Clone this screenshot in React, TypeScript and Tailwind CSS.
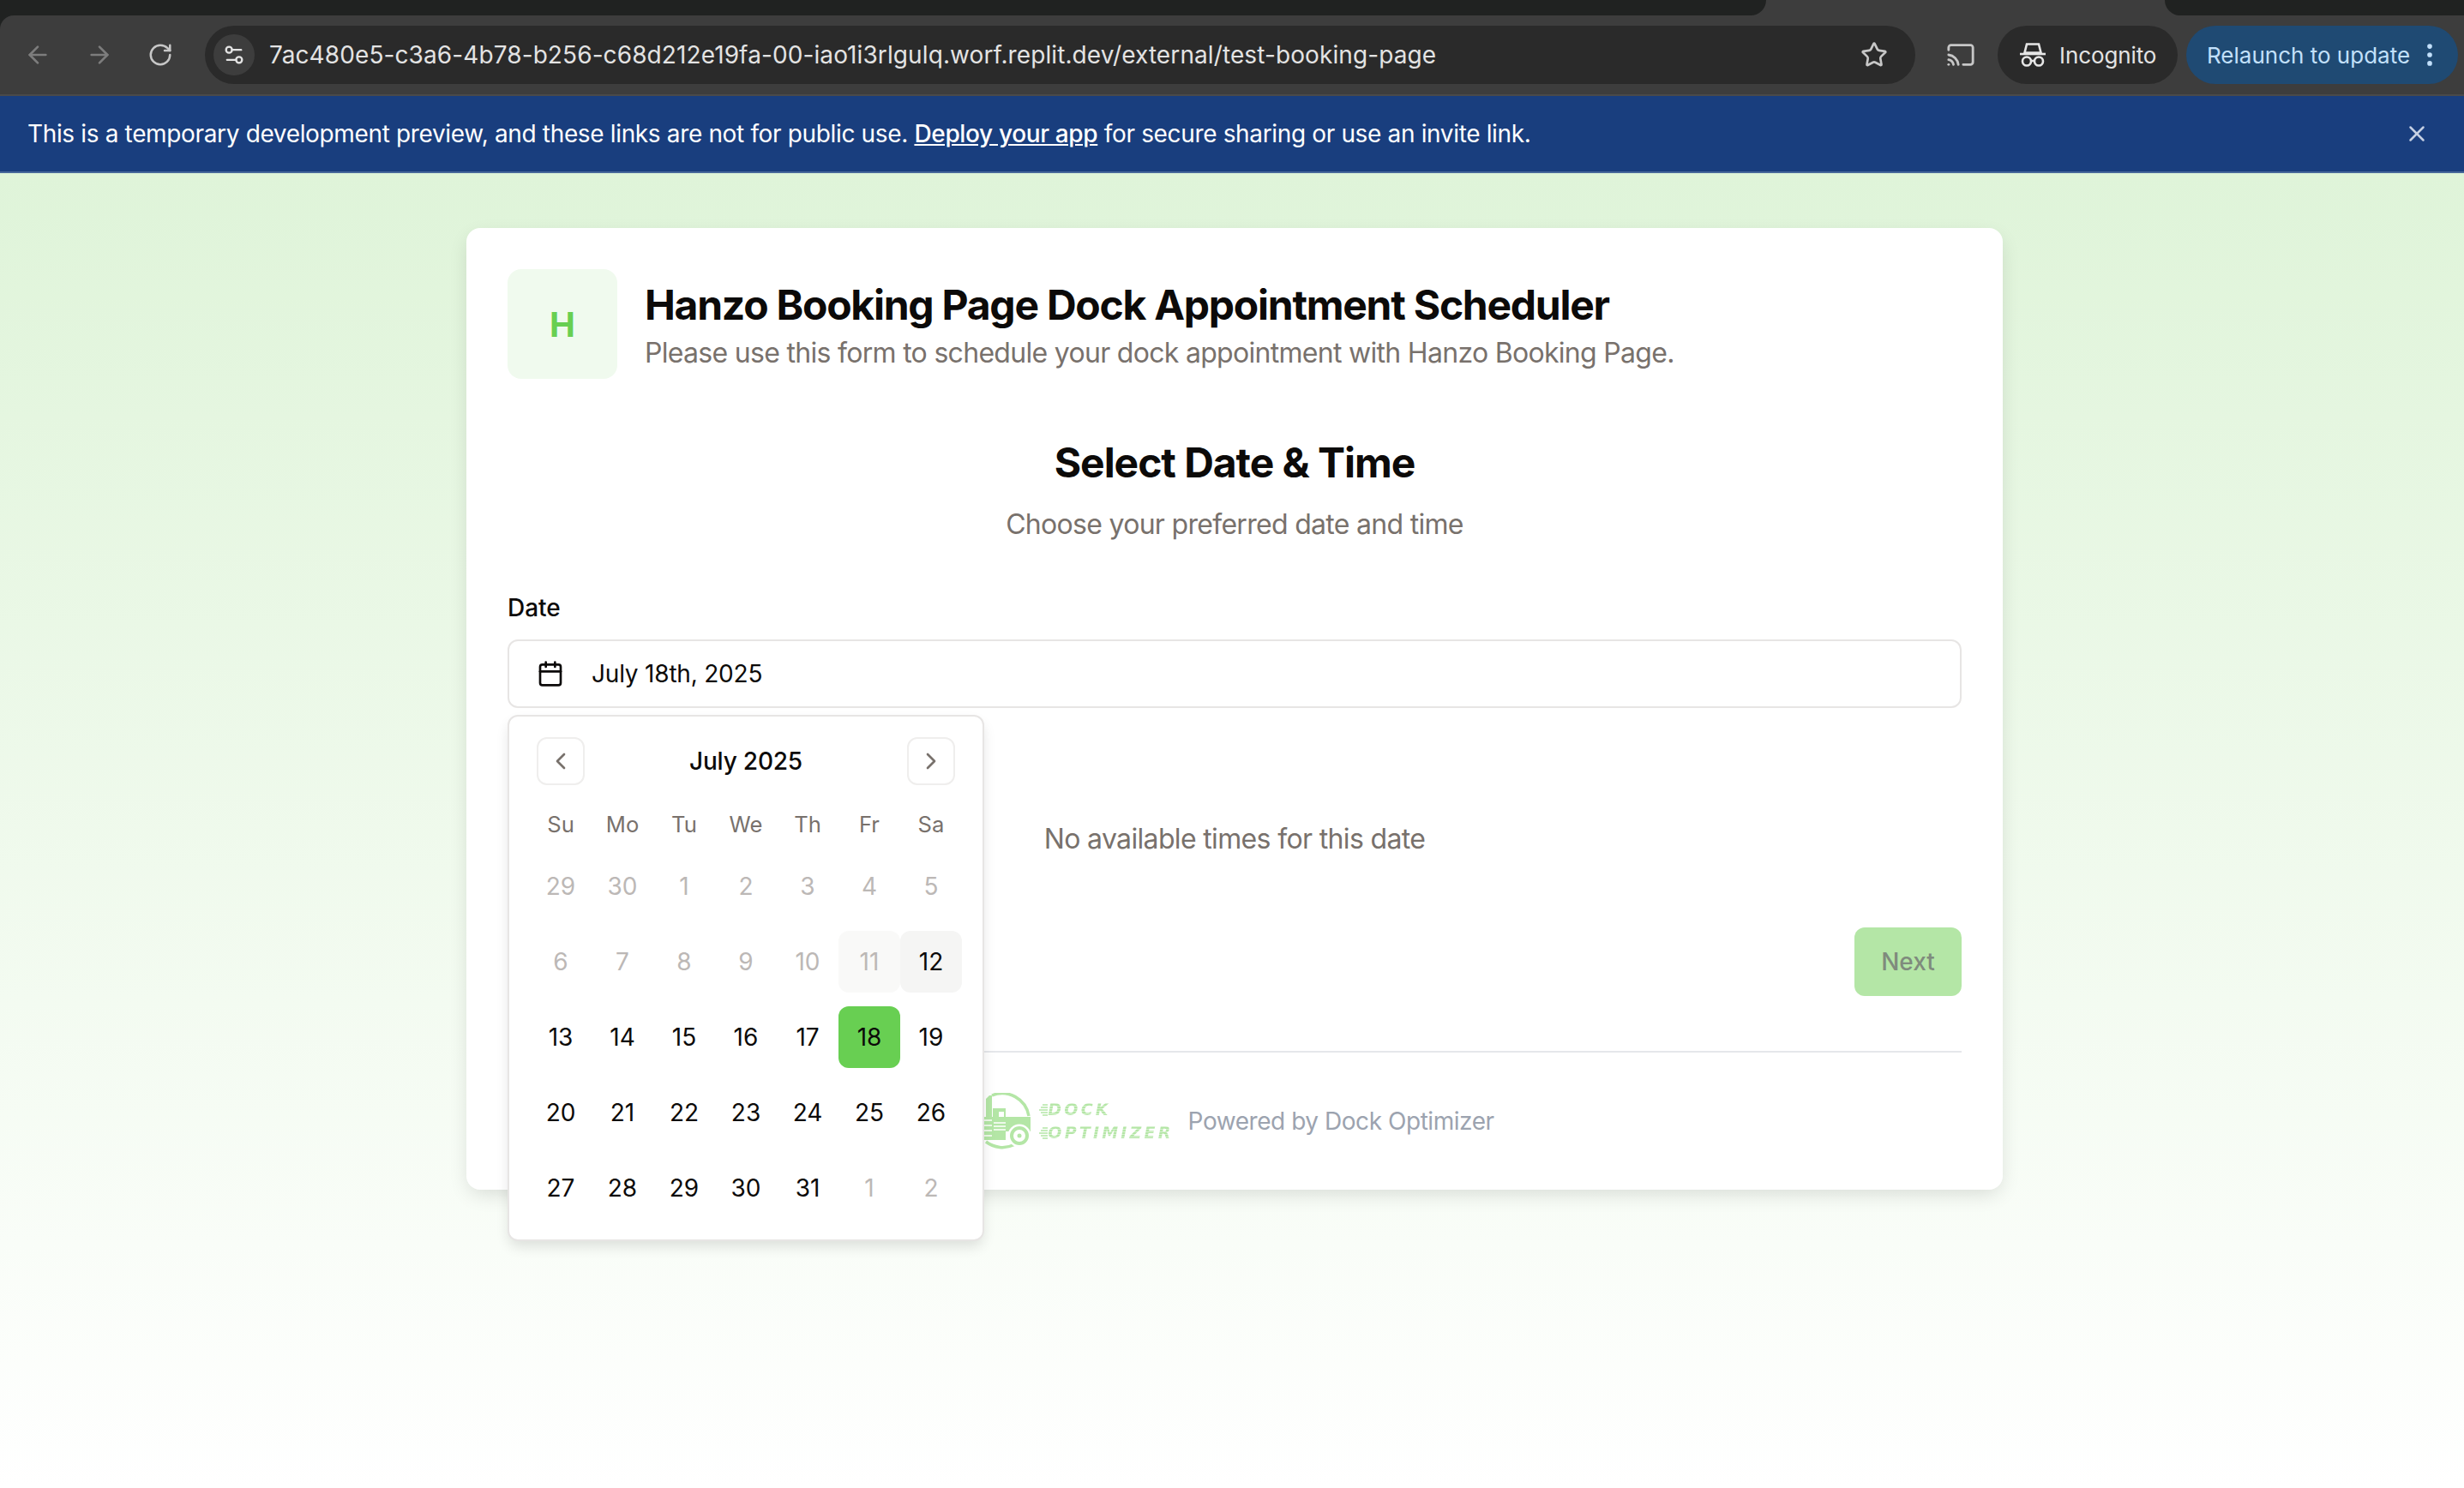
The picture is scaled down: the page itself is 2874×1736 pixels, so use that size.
import { ArrowLeft, ArrowRight, Calendar, Cast, ChevronLeft, ChevronRight, MoreVertical, RotateCw, Settings2, Star, X } from 'lucide-react';

const weekDays = ['Su', 'Mo', 'Tu', 'We', 'Th', 'Fr', 'Sa'];

type Day = { label: number; muted?: boolean; tone?: 'soft' | 'today' | 'selected' };

const weeks: Day[][] = [
  [{ label: 29, muted: true }, { label: 30, muted: true }, { label: 1, muted: true }, { label: 2, muted: true }, { label: 3, muted: true }, { label: 4, muted: true }, { label: 5, muted: true }],
  [{ label: 6, muted: true }, { label: 7, muted: true }, { label: 8, muted: true }, { label: 9, muted: true }, { label: 10, muted: true }, { label: 11, muted: true, tone: 'soft' }, { label: 12, tone: 'today' }],
  [{ label: 13 }, { label: 14 }, { label: 15 }, { label: 16 }, { label: 17 }, { label: 18, tone: 'selected' }, { label: 19 }],
  [{ label: 20 }, { label: 21 }, { label: 22 }, { label: 23 }, { label: 24 }, { label: 25 }, { label: 26 }],
  [{ label: 27 }, { label: 28 }, { label: 29 }, { label: 30 }, { label: 31 }, { label: 1, muted: true }, { label: 2, muted: true }],
];

function IncognitoIcon() {
  return (
    <svg width="30" height="28" viewBox="0 0 30 28" fill="none" stroke="#e6e6e6" strokeWidth="2.6">
      <path d="M8 1.5h14l2.5 10h-19z" fill="#2a2a2a" />
      <path d="M0 13h30" />
      <circle cx="8" cy="21.5" r="5" />
      <circle cx="22" cy="21.5" r="5" />
      <path d="M13 21h4" />
    </svg>
  );
}

function TruckLogo() {
  return (
    <svg width="68" height="66" viewBox="0 0 68 66" fill="none">
      <path d="M20 3A31.5 31.5 0 0 1 63 27" stroke="#b4e6a6" strokeWidth="3.5" />
      <path d="M13 57A31.5 31.5 0 0 0 46 60.5" stroke="#b4e6a6" strokeWidth="3.5" />
      <path d="M13 7l4-4h3v47h-7z" fill="#b4e6a6" />
      <path d="M21 18h15v10h29v17H21z" fill="#b4e6a6" />
      <path d="M11 28h25v27H11z" fill="#b4e6a6" />
      <path d="M28 22h6v6h-6z" fill="#fff" />
      <path d="M22 35h14M22 39h14M22 43h14M11 32h9M11 38h9M11 44h9M11 50h9" stroke="#fff" strokeWidth="1.4" />
      <circle cx="52" cy="50" r="13.5" fill="#fff" />
      <circle cx="52" cy="50" r="9" stroke="#b4e6a6" strokeWidth="4" />
      <circle cx="52" cy="50" r="2.5" fill="#b4e6a6" />
    </svg>
  );
}

function SpeedLines() {
  return (
    <svg width="10" height="14" viewBox="0 0 10 14" stroke="#b4e6a6" strokeWidth="1.4">
      <path d="M4 1h6M2 4h8M0 7h10M2 10h8M4 13h6" />
    </svg>
  );
}

function BrowserChrome() {
  return (
    <div className="bg-[#202221]">
      <div className="flex h-[18px] bg-[#3d3d3d]">
        <div className="w-[2060px] rounded-br-[20px] bg-[#202221]" />
        <div className="w-[465px]" />
        <div className="flex-1 rounded-bl-[20px] bg-[#202221]" />
      </div>
      <div className="flex h-[92px] items-center rounded-tl-[16px] bg-[#3d3d3d] pl-[28px] pr-[6px]">
        <ArrowLeft className="h-[32px] w-[32px] text-[#7d7d7d]" strokeWidth={2} />
        <ArrowRight className="ml-[40px] h-[32px] w-[32px] text-[#7d7d7d]" strokeWidth={2} />
        <RotateCw className="ml-[40px] h-[30px] w-[30px] text-[#c7c7c7]" strokeWidth={2} />
        <div className="ml-[37px] flex h-[68px] w-[1995px] items-center rounded-full bg-[#2a2a2a] pl-[10px] pr-[32px]">
          <div className="flex h-[48px] w-[48px] items-center justify-center rounded-full bg-[#3d3d3d]">
            <Settings2 className="h-[28px] w-[28px] text-[#e3e3e3]" strokeWidth={2} />
          </div>
          <span className="ml-[17px] flex-1 text-[28px] tracking-[0.1px] text-[#e3e3e3]">7ac480e5-c3a6-4b78-b256-c68d212e19fa-00-iao1i3rlgulq.worf.replit.dev/external/test-booking-page</span>
          <Star className="h-[32px] w-[32px] text-[#c7c7c7]" strokeWidth={2} />
        </div>
        <Cast className="ml-[36px] h-[34px] w-[34px] text-[#c7c7c7]" strokeWidth={2} />
        <div className="ml-[26px] flex h-[68px] w-[210px] items-center rounded-full bg-[#2a2a2a] pl-[26px]">
          <IncognitoIcon />
          <span className="ml-[16px] text-[26px] tracking-[-0.1px] text-[#e3e3e3]">Incognito</span>
        </div>
        <div className="ml-[10px] flex h-[68px] w-[317px] items-center rounded-full bg-[#1f4a73] pl-[24px]">
          <span className="text-[26px] text-[#c2e0fb]">Relaunch to update</span>
          <MoreVertical className="ml-[6px] h-[34px] w-[34px] text-[#c2e0fb]" strokeWidth={2} />
        </div>
      </div>
      <div className="h-[2px] bg-[#4a4a4a]" />
      <div className="flex h-[90px] items-center justify-between border-b-2 border-[#47689a] bg-[#193e7e] pl-[32px] pr-[40px] text-[28px] tracking-[-0.35px] text-white">
        <span>
          This is a temporary development preview, and these links are not for public use. <span className="font-medium underline">Deploy your app</span> for secure sharing or use an invite link.
        </span>
        <X className="h-[30px] w-[30px] text-[#c5d0e3]" strokeWidth={2} />
      </div>
    </div>
  );
}

function DatePopover() {
  return (
    <div className="absolute left-0 top-[88px] z-10 w-[556px] rounded-[12px] border-2 border-[#e7e5e4] bg-white p-[24px] shadow-[0_8px_16px_-2px_rgba(0,0,0,0.12)]">
      <div className="flex h-[56px] items-center justify-between px-[8px]">
        <button className="flex h-[56px] w-[56px] items-center justify-center rounded-[12px] border-2 border-[#efeeed] text-[#78716c]">
          <ChevronLeft className="h-[32px] w-[32px]" strokeWidth={2} />
        </button>
        <span className="text-[28px] font-medium tracking-[-0.2px] text-[#0c0a09]">July 2025</span>
        <button className="flex h-[56px] w-[56px] items-center justify-center rounded-[12px] border-2 border-[#efeeed] text-[#78716c]">
          <ChevronRight className="h-[32px] w-[32px]" strokeWidth={2} />
        </button>
      </div>
      <div className="mt-[26px] grid h-[40px] grid-cols-7 items-center text-center text-[25.6px] text-[#78716c]">
        {weekDays.map((d) => (
          <span key={d}>{d}</span>
        ))}
      </div>
      <div className="mt-[16px] flex flex-col gap-[16px]">
        {weeks.map((week, i) => (
          <div key={i} className="grid grid-cols-7">
            {week.map((day, j) => (
              <div
                key={j}
                className={
                  day.tone === 'selected'
                    ? 'flex h-[72px] items-center justify-center rounded-[12px] bg-[#68cf52] text-[28px] text-[#0c0a09]'
                    : day.tone === 'today'
                      ? 'flex h-[72px] items-center justify-center rounded-[12px] bg-[#f5f5f4] text-[28px] text-[#0c0a09]'
                      : day.tone === 'soft'
                        ? 'flex h-[72px] items-center justify-center rounded-[12px] bg-[#f9f9f8] text-[28px] text-[#bcb8b6]'
                        : day.muted
                          ? 'flex h-[72px] items-center justify-center text-[28px] text-[#bcb8b6]'
                          : 'flex h-[72px] items-center justify-center text-[28px] text-[#0c0a09]'
                }
              >
                {day.label}
              </div>
            ))}
          </div>
        ))}
      </div>
    </div>
  );
}

export default function App() {
  return (
    <div className="flex min-h-[1736px] flex-col overflow-hidden bg-white [font-family:Inter,sans-serif]">
      <BrowserChrome />

      {/* Page */}
      <main className="flex flex-1 justify-center bg-linear-to-b from-[#dff4d9] to-white pl-[6px] pt-[64px]">
        <div className="h-[1122px] w-[1792px] rounded-[16px] bg-white px-[48px] pt-[48px] shadow-[0_8px_24px_-4px_rgba(0,0,0,0.14)]">
          {/* Header */}
          <div className="flex items-center gap-[32px]">
            <div className="flex h-[128px] w-[128px] items-center justify-center rounded-[16px] bg-[#f0faee] pt-[2px] text-[40px] font-bold text-[#68cf52]">
              H
            </div>
            <div className="pt-[6px]">
              <h1 className="text-[48px] font-bold leading-[56px] tracking-[-1.25px] text-[#0c0a09]">Hanzo Booking Page Dock Appointment Scheduler</h1>
              <p className="mt-[6px] text-[32px] leading-[44px] tracking-[-0.7px] text-[#78716c]">Please use this form to schedule your dock appointment with Hanzo Booking Page.</p>
            </div>
          </div>

          {/* Step title */}
          <div className="mt-[66px] text-center">
            <h2 className="text-[48px] font-bold leading-[64px] tracking-[-1.05px] text-[#0c0a09]">Select Date &amp; Time</h2>
            <p className="mt-[16px] text-[32px] leading-[48px] tracking-[-0.7px] text-[#78716c]">Choose your preferred date and time</p>
          </div>

          {/* Date field */}
          <div className="mt-[53px]">
            <label className="block text-[28px] font-medium leading-[40px] text-[#0c0a09]">Date</label>
            <div className="relative mt-[17px]">
              <div className="flex h-[80px] items-center rounded-[12px] border-2 border-[#e7e5e4] pl-[32px] text-[28px] tracking-[-0.2px] text-[#0c0a09]">
                <Calendar className="h-[32px] w-[32px]" strokeWidth={2} />
                <span className="ml-[32px]">July 18th, 2025</span>
              </div>
              <DatePopover />
            </div>
          </div>

          {/* Times */}
          <p className="mt-[129px] text-center text-[32px] leading-[48px] tracking-[-0.65px] text-[#78716c]">No available times for this date</p>

          <div className="mt-[79px] flex justify-end">
            <button className="flex h-[80px] w-[125px] items-center justify-center rounded-[12px] bg-[#b4e6a6] text-[28px] font-medium text-[#7f8b7d]">Next</button>
          </div>

          {/* Footer */}
          <div className="mt-[64px] flex h-[162px] items-center justify-center gap-[17px] border-t-2 border-[#e5e7eb]">
            <div className="flex items-center gap-[7px]">
              <TruckLogo />
              <div className="flex flex-col gap-[8px] text-[19px] font-bold italic leading-[19px] tracking-[3.2px] [font-family:'DejaVu_Sans',sans-serif]">
                <span className="flex items-center">
                  <SpeedLines />
                  <span className="bg-[repeating-linear-gradient(180deg,#b4e6a6_0px,#b4e6a6_2px,#d6f1ce_2px,#d6f1ce_3px)] bg-clip-text text-transparent">DOCK</span>
                </span>
                <span className="flex items-center">
                  <SpeedLines />
                  <span className="bg-[repeating-linear-gradient(180deg,#b4e6a6_0px,#b4e6a6_2px,#d6f1ce_2px,#d6f1ce_3px)] bg-clip-text text-transparent">OPTIMIZER</span>
                </span>
              </div>
            </div>
            <span className="text-[28px] tracking-[-0.45px] text-[#9ca3af]">Powered by Dock Optimizer</span>
          </div>
        </div>
      </main>
    </div>
  );
}
